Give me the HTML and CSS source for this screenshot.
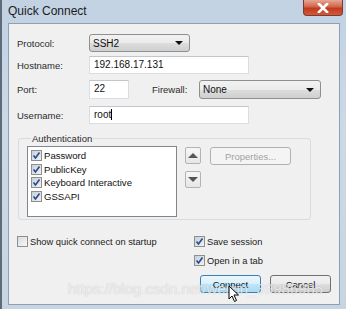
FILE: index.html
```html
<!DOCTYPE html>
<html lang="en">
<head>
    <meta charset="UTF-8">
    <title>Quick Connect</title>
    <link rel="stylesheet" href="styles.css">
</head>
<body>
    <div class="window">
        <div class="titlebar">
            <span class="title">Quick Connect</span>
            <div class="close">
                <svg width="12" height="10" viewBox="0 0 12 10"><path d="M2 1 L10 9 M10 1 L2 9" stroke="#fff" stroke-width="2.6" stroke-linecap="square"/></svg>
            </div>
        </div>
        <div class="client">
            <div class="row row-protocol">
                <span class="label">Protocol:</span>
                <div class="select w-protocol">SSH2<span class="arrow"></span></div>
            </div>
            <div class="row row-host">
                <span class="label">Hostname:</span>
                <div class="input w-host">192.168.17.131</div>
            </div>
            <div class="row row-port">
                <span class="label">Port:</span>
                <div class="input w-port">22</div>
                <span class="label-fw">Firewall:</span>
                <div class="select w-fw">None<span class="arrow"></span></div>
            </div>
            <div class="row row-user">
                <span class="label">Username:</span>
                <div class="input w-host">root<span class="caret"></span></div>
            </div>

            <fieldset class="auth">
                <legend>Authentication</legend>
                <div class="auth-body">
                    <div class="listbox">
                        <div class="item"><span class="cb on"></span>Password</div>
                        <div class="item"><span class="cb on"></span>PublicKey</div>
                        <div class="item"><span class="cb on"></span>Keyboard Interactive</div>
                        <div class="item"><span class="cb on"></span>GSSAPI</div>
                    </div>
                    <div class="movers">
                        <div class="mover"><span class="tri-up"></span></div>
                        <div class="mover"><span class="tri-down"></span></div>
                    </div>
                    <div class="btn disabled w-props">Properties...</div>
                </div>
            </fieldset>

            <div class="options">
                <div class="check"><span class="cb"></span>Show quick connect on startup</div>
                <div class="opt-right">
                    <div class="check"><span class="cb on"></span>Save session</div>
                    <div class="check"><span class="cb on"></span>Open in a tab</div>
                </div>
            </div>

            <div class="buttons">
                <div class="btn default">Connect</div>
                <div class="btn">Cancel</div>
            </div>
        </div>

        <div class="watermark">https://blog.csdn.net/weixin_39986985</div>
        <svg class="cursor" width="12" height="18" viewBox="0 0 12 18">
            <path d="M1 1 L1 14 L4 11 L6.5 16.5 L8.5 15.5 L6 10 L10.5 10 Z" fill="#fff" stroke="#000" stroke-width="1"/>
        </svg>
    </div>
</body>
</html>
```

FILE: styles.css
```css
body {
    margin: 0;
    font-family: "Liberation Sans", Arial, sans-serif;
    font-size: 10px;
    color: #1e1e1e;
    background: #fff;
}

.window {
    position: relative;
    width: 346px;
    height: 309px;
    box-sizing: border-box;
    border-left: 2px solid #5f6b78;
    background: linear-gradient(#c2d2e3, #cbd8e6 40%, #c7d4e2);
    display: flex;
    flex-direction: column;
    overflow: hidden;
}

.titlebar {
    height: 23px;
    display: flex;
    justify-content: space-between;
    align-items: flex-start;
}

.title {
    font-size: 12px;
    margin: 4px 0 0 6px;
    color: #1b1b1b;
}

.close {
    width: 40px;
    height: 16px;
    margin-right: 3px;
    box-sizing: border-box;
    border: 1px solid #7a3a30;
    border-top: none;
    border-radius: 0 0 4px 4px;
    background: linear-gradient(#e7a793, #d0664c 45%, #c2391d 55%, #d2593b);
    display: flex;
    align-items: center;
    justify-content: center;
}

.client {
    flex: 1;
    margin: 0 6px 4px 6px;
    background: #f0f0f0;
    border: 1px solid #8d9fb2;
    padding-left: 8px;
}

.row {
    display: flex;
    align-items: center;
}

.row-protocol { margin-top: 10px; height: 18px; }
.row-host { margin-top: 4px; height: 18px; }
.row-port { margin-top: 6px; height: 19px; }
.row-user { margin-top: 7px; height: 18px; }

.label {
    width: 72px;
    font-size: 9.5px;
    color: #2b2b2b;
}

.label-fw {
    margin-left: 23px;
    width: 47px;
    font-size: 9.5px;
    color: #2b2b2b;
}

.input {
    height: 100%;
    box-sizing: border-box;
    background: #fff;
    border: 1px solid #dadde2;
    border-top-color: #c2c6cc;
    padding: 2px 0 0 4px;
    color: #111;
}

.w-host { width: 160px; }
.w-port { width: 40px; }
.w-protocol { width: 101px; }
.w-fw { width: 122px; align-self: flex-end; height: 16px; }

.caret {
    display: inline-block;
    width: 1px;
    height: 11px;
    background: #000;
    vertical-align: -2px;
}

.select {
    height: 100%;
    box-sizing: border-box;
    border: 1px solid #8e8f8f;
    border-radius: 3px;
    background: linear-gradient(#f2f2f2, #ebebeb 50%, #dddddd 51%, #cfcfcf);
    padding: 0 0 0 3px;
    display: flex;
    align-items: center;
    justify-content: space-between;
    color: #111;
}

.arrow {
    width: 0;
    height: 0;
    margin-right: 6px;
    border-left: 4px solid transparent;
    border-right: 4px solid transparent;
    border-top: 4px solid #111;
}

.auth {
    width: 293px;
    height: 87px;
    box-sizing: border-box;
    margin: 9px 0 0 1px;
    padding: 0 0 0 8px;
    border: 1px solid #d5dde3;
    border-radius: 3px;
}

.auth legend {
    padding: 0 1px;
    margin-left: 4px;
    font-size: 9.5px;
    color: #2b2b2b;
}

.auth-body {
    display: flex;
    align-items: flex-start;
    margin-top: 2px;
}

.listbox {
    width: 150px;
    height: 71px;
    box-sizing: border-box;
    background: #fff;
    border: 1px solid #82878f;
    padding: 2px 0 0 3px;
}

.item {
    height: 13.5px;
    display: flex;
    align-items: center;
    color: #111;
    font-size: 9.6px;
}

.cb {
    width: 11px;
    height: 11px;
    box-sizing: border-box;
    border: 1px solid #8e8f8f;
    background: linear-gradient(135deg, #dcdcdc, #f6f6f6);
    margin-right: 2px;
    flex: none;
}

.cb.on {
    background-color: #dfe4ea;
    background-image: url("data:image/svg+xml;utf8,<svg xmlns='http://www.w3.org/2000/svg' width='9' height='9'><path d='M1.5 4.5 L3.5 7 L7.5 1.5' fill='none' stroke='%23284a8c' stroke-width='1.6'/></svg>"), linear-gradient(135deg, #c9d0d8, #eef1f4);
    background-repeat: no-repeat;
    background-position: center;
}

.movers {
    margin-left: 8px;
    display: flex;
    flex-direction: column;
    gap: 7px;
    margin-top: 1px;
}

.mover {
    width: 16px;
    height: 17px;
    box-sizing: border-box;
    border: 1px solid #b4b4b4;
    border-radius: 2px;
    background: linear-gradient(#f7f7f7, #e6e6e6);
    display: flex;
    align-items: center;
    justify-content: center;
}

.tri-up {
    border-left: 5px solid transparent;
    border-right: 5px solid transparent;
    border-bottom: 5px solid #555;
}

.tri-down {
    border-left: 5px solid transparent;
    border-right: 5px solid transparent;
    border-top: 5px solid #555;
}

.btn {
    height: 18px;
    width: 61px;
    box-sizing: border-box;
    border: 1px solid #707070;
    border-radius: 3px;
    background: linear-gradient(#f2f2f2, #ebebeb 50%, #dddddd 51%, #cfcfcf);
    display: flex;
    align-items: center;
    justify-content: center;
    font-size: 9.5px;
    color: #111;
}

.btn.disabled {
    border-color: #adb2b5;
    background: #f4f4f4;
    color: #a2a2a2;
}

.w-props {
    width: 81px;
    margin: 1px 0 0 9px;
}

.btn.default {
    border-color: #3c7fb1;
    background: linear-gradient(#eaf6fd, #d9f0fc 50%, #bee6fd 51%, #a7d9f5);
}

.options {
    display: flex;
    margin-top: 16px;
}

.options > .check {
    width: 177px;
}

.opt-right {
    display: flex;
    flex-direction: column;
    gap: 8px;
}

.check {
    display: flex;
    align-items: center;
    height: 11px;
    color: #1b1b1b;
    font-size: 9.3px;
}

.buttons {
    display: flex;
    gap: 9px;
    margin: 9px 0 0 183px;
}

.watermark {
    position: absolute;
    left: 66px;
    top: 280px;
    font-size: 15px;
    color: rgba(255, 255, 255, 0.7);
    text-shadow: 0 0 1px rgba(120, 120, 120, 0.45);
    white-space: nowrap;
    pointer-events: none;
}

.cursor {
    position: absolute;
    left: 226px;
    top: 285px;
}
```
